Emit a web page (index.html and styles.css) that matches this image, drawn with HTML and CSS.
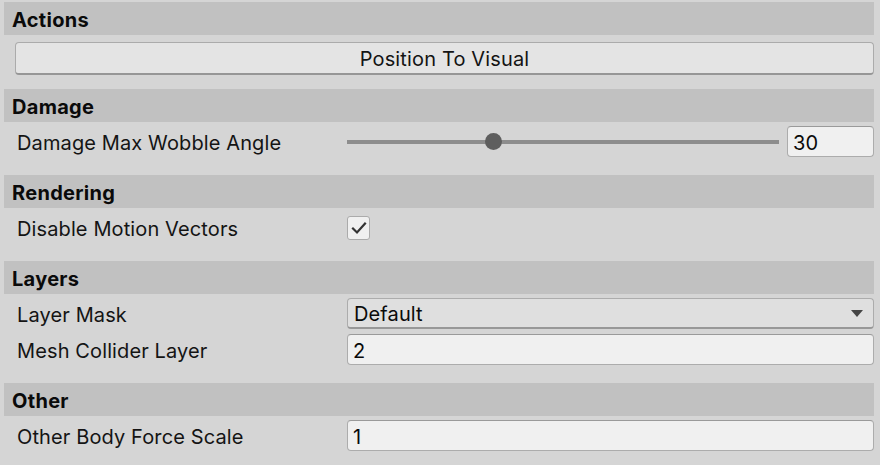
FILE: index.html
```html
<!DOCTYPE html>
<html>
<head>
<meta charset="utf-8">
<link rel="stylesheet" href="styles.css">
</head>
<body>
<div class="inspector">
  <section class="section">
    <div class="header">Actions</div>
    <div class="body body-actions">
      <button class="btn">Position To Visual</button>
    </div>
  </section>
  <section class="section">
    <div class="header">Damage</div>
    <div class="body">
      <div class="row">
        <div class="label">Damage Max Wobble Angle</div>
        <div class="control slider-control">
          <div class="slider">
            <div class="track"></div>
            <div class="knob" style="left: 33.7%"></div>
          </div>
          <div class="field num">30</div>
        </div>
      </div>
    </div>
  </section>
  <section class="section">
    <div class="header">Rendering</div>
    <div class="body">
      <div class="row">
        <div class="label">Disable Motion Vectors</div>
        <div class="control">
          <div class="checkbox">
            <svg width="16" height="14" viewBox="0 0 16 14"><path d="M2 7.5 L6 11.5 L14 2.5" fill="none" stroke="#333" stroke-width="2.2" stroke-linecap="square" stroke-linejoin="miter"/></svg>
          </div>
        </div>
      </div>
    </div>
  </section>
  <section class="section">
    <div class="header">Layers</div>
    <div class="body">
      <div class="row">
        <div class="label">Layer Mask</div>
        <div class="control">
          <div class="dropdown"><span>Default</span><span class="arrow"></span></div>
        </div>
      </div>
      <div class="row">
        <div class="label">Mesh Collider Layer</div>
        <div class="control">
          <div class="field">2</div>
        </div>
      </div>
    </div>
  </section>
  <section class="section">
    <div class="header">Other</div>
    <div class="body">
      <div class="row">
        <div class="label">Other Body Force Scale</div>
        <div class="control">
          <div class="field">1</div>
        </div>
      </div>
    </div>
  </section>
</div>
</body>
</html>
```
FILE: styles.css
```css
html, body {
  margin: 0;
  padding: 0;
  background: #d5d5d5;
}
body {
  font-family: Inter, "Noto Sans", sans-serif;
  color: #101010;
  width: 880px;
  height: 465px;
  overflow: hidden;
}
.inspector {
  padding: 2px 6px 0 4px;
  display: flex;
  flex-direction: column;
}
.header {
  box-sizing: border-box;
  height: 33px;
  background: #c1c1c1;
  padding: 2px 0 0 8px;
  display: flex;
  align-items: center;
  font-weight: 700;
  font-size: 20px;
  letter-spacing: 0.3px;
  color: #0a0a0a;
}
.body {
  display: flex;
  flex-direction: column;
  gap: 5px;
  padding: 4px 0 18px 0;
}
.body-actions {
  padding: 7px 0 14px 11px;
}
.btn {
  height: 33px;
  width: 100%;
  box-sizing: border-box;
  background: #e4e4e4;
  border: 1px solid #ababab;
  border-bottom: 2px solid #969696;
  border-radius: 4px;
  font-family: Inter, "Noto Sans", sans-serif;
  font-size: 20px;
  letter-spacing: 0.15px;
  color: #141414;
  padding: 2px 0 0 0;
}
.row {
  height: 31px;
  display: flex;
  align-items: center;
  padding-left: 13px;
}
.label {
  width: 330px;
  flex: none;
  font-size: 20px;
  letter-spacing: 0.12px;
  padding-top: 3px;
  color: #141414;
}
.control {
  flex: 1;
  display: flex;
  align-items: center;
  height: 31px;
}
.slider-control {
  gap: 8px;
}
.slider {
  position: relative;
  flex: 1;
  height: 31px;
}
.track {
  position: absolute;
  left: 0;
  right: 0;
  top: 14px;
  height: 4px;
  background: #8d8d8d;
}
.knob {
  position: absolute;
  top: 7px;
  width: 17px;
  height: 17px;
  margin-left: -8px;
  border-radius: 50%;
  background: #5e5e5e;
}
.field {
  box-sizing: border-box;
  height: 31px;
  flex: 1;
  background: #f0f0f0;
  border: 1px solid #acacac;
  border-top-color: #9a9a9a;
  border-radius: 4px;
  display: flex;
  align-items: center;
  padding: 2px 0 0 5px;
  font-size: 20px;
  letter-spacing: 0.12px;
  color: #0a0a0a;
}
.field.num {
  flex: none;
  width: 87px;
}
.checkbox {
  box-sizing: border-box;
  width: 23px;
  height: 24px;
  background: #f0f0f0;
  border: 1px solid #ababab;
  border-radius: 3px;
  display: flex;
  align-items: center;
  justify-content: center;
}
.dropdown {
  box-sizing: border-box;
  flex: 1;
  height: 31px;
  background: #dfdfdf;
  border: 1px solid #acacac;
  border-bottom: 2px solid #989898;
  border-radius: 4px;
  display: flex;
  align-items: center;
  justify-content: space-between;
  padding: 2px 10px 0 6px;
  font-size: 20px;
  letter-spacing: 0.12px;
  color: #0a0a0a;
}
.arrow {
  width: 0;
  height: 0;
  margin-top: -2px;
  border-left: 6.5px solid transparent;
  border-right: 6.5px solid transparent;
  border-top: 7px solid #454545;
}
```
